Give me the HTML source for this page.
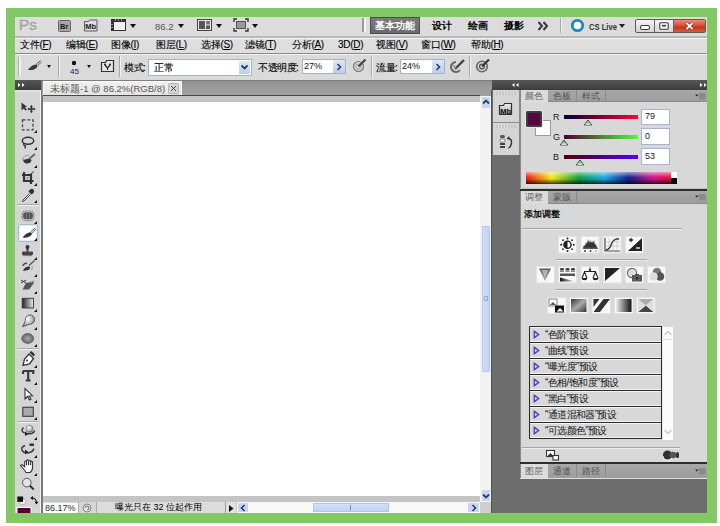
<!DOCTYPE html>
<html><head><meta charset="utf-8">
<style>
*{margin:0;padding:0;box-sizing:border-box}
html,body{width:720px;height:526px;overflow:hidden;background:#fff}
body{position:relative;font-family:"Liberation Sans",sans-serif;color:#111}
div,svg{position:absolute}
.t{white-space:nowrap;line-height:1}
.menu{font-size:10px;color:#000;top:40px;letter-spacing:-0.3px;-webkit-text-stroke:0.12px #000}
.menu u{text-decoration:underline}
.tl{font-size:10px;color:#000;font-weight:bold;top:21px}
.tab{font-size:9px;color:#606060}
.itab{font-size:9px;color:#505050}
.arr{width:0;height:0;border-left:3px solid transparent;border-right:3px solid transparent;border-top:3px solid #111}
.ib{background:#f6f6f6;border:1px solid #e4e4e4}
.row{left:530px;width:132px;height:16px;background:#d9d9d9;border-top:1px solid #2a2a2a;border-bottom:1px solid #fafafa}
.row .tri{left:4px;top:3px}
.row .t{left:14px;top:3px;font-size:10px;color:#111}
</style></head><body>
<!-- frame -->
<div style="left:6px;top:8px;width:711px;height:515px;background:#84c765"></div>
<div style="left:15px;top:17px;width:692px;height:496px;background:#d8d8d8"></div>

<!-- ===== title bar ===== -->
<div style="left:15px;top:17px;width:692px;height:19px;background:#dcdcdc"></div>
<div style="left:15px;top:36px;width:692px;height:2px;background:#b8b8b8"></div>
<div style="left:15px;top:38px;width:692px;height:1px;background:#f4f4f4"></div>
<!-- ===== menu bar ===== -->
<div style="left:15px;top:39px;width:692px;height:14px;background:#dedede"></div>
<div style="left:15px;top:53px;width:692px;height:1px;background:#8a8a8a"></div>
<div style="left:15px;top:54px;width:692px;height:1px;background:#f2f2f2"></div>
<!-- ===== options bar ===== -->
<div style="left:15px;top:55px;width:692px;height:25px;background:#dadada"></div>

<!-- ===== toolbar ===== -->
<div style="left:15px;top:80px;width:26px;height:10px;background:linear-gradient(#575757,#3c3c3c)"></div>
<div style="left:15px;top:90px;width:26px;height:423px;background:#d5d5d5"></div>
<div style="left:40px;top:90px;width:1px;height:423px;background:#f4f4f4"></div>
<div style="left:41px;top:80px;width:2px;height:433px;background:#777"></div>

<!-- ===== document ===== -->
<div style="left:42px;top:80px;width:450px;height:16px;background:linear-gradient(#6e6e6e,#8e8e8e 1px,#9a9a9a 40%,#a0a0a0)"></div>
<div style="left:43px;top:81px;width:139px;height:14px;background:linear-gradient(#f0f0f0,#e4e4e4);border:1px solid #fafafa;border-bottom:0"></div>
<div style="left:43px;top:95px;width:437px;height:1px;background:#4a4a4a"></div>
<div style="left:43px;top:96px;width:437px;height:6px;background:#c4c4c4"></div>
<div style="left:43px;top:102px;width:437px;height:394px;background:#fff"></div>
<div style="left:480px;top:96px;width:12px;height:406px;background:#f2f2f2"></div>
<div style="left:43px;top:496px;width:437px;height:6px;background:#c4c4c4"></div>
<div style="left:43px;top:502px;width:449px;height:11px;background:#dcdcdc"></div>

<!-- ===== dock ===== -->
<div style="left:492px;top:80px;width:215px;height:433px;background:#6d6d6d"></div>
<div style="left:492px;top:80px;width:215px;height:10px;background:linear-gradient(#575757,#3c3c3c)"></div>
<div style="left:493px;top:90px;width:26px;height:65px;background:#d5d5d5"></div>
<div style="left:520px;top:90px;width:187px;height:99px;background:#d8d8d8"></div>
<div style="left:520px;top:191px;width:187px;height:272px;background:#d8d8d8"></div>
<div style="left:520px;top:478px;width:187px;height:1px;background:#e0e0e0"></div>


<!-- title bar content -->
<div class="t" style="left:19px;top:16.5px;font-size:15.5px;color:#a4a4a4;-webkit-text-stroke:0.5px #a4a4a4;text-shadow:1px 1px 0 #f2f2f2">Ps</div>
<svg style="left:57px;top:19px" width="15" height="13"><rect x="1.5" y="1.5" width="12" height="11" rx="1" fill="#a6a6a6" stroke="#666"/><text x="3" y="10" font-size="7.5" font-weight="bold" font-family="Liberation Sans" fill="#1a1a1a">Br</text></svg>
<svg style="left:83px;top:18px" width="16" height="14"><path d="M1.5 3.5h4l1-1.5h7.5v11h-12.5z" fill="#dcdcdc" stroke="#5a5a5a"/><text x="2.2" y="11" font-size="7.5" font-weight="bold" font-family="Liberation Sans" fill="#1a1a1a">Mb</text></svg>
<svg style="left:110px;top:18px" width="17" height="14"><rect x="1.5" y="1.5" width="14" height="11" fill="#f0f0f0" stroke="#333"/><rect x="1" y="1" width="15" height="3" fill="#333"/><rect x="1" y="1" width="3" height="12" fill="#333"/><path d="M5 2h1M8 2h1M11 2h1M2 6v1M2 9v1" stroke="#ddd"/></svg>
<div class="arr" style="left:130px;top:24px;border-width:4px 3px 0 3px"></div>
<div class="t" style="left:155px;top:22px;font-size:9.5px;color:#555">86.2</div>
<div class="arr" style="left:178px;top:24px;border-width:4px 3px 0 3px"></div>
<svg style="left:196px;top:18px" width="17" height="14"><rect x="1.5" y="1.5" width="14" height="11" fill="#e8e8e8" stroke="#444"/><rect x="3" y="3" width="6" height="8" fill="#555"/><rect x="10" y="3" width="4" height="3.5" fill="#777"/><rect x="10" y="7.5" width="4" height="3.5" fill="#555"/></svg>
<div class="arr" style="left:216px;top:24px;border-width:4px 3px 0 3px"></div>
<svg style="left:233px;top:18px" width="16" height="14"><rect x="3.5" y="3.5" width="9" height="7" fill="#999" stroke="#555"/><path d="M1 4V1h3M12 1h3v3M15 10v3h-3M4 13H1v-3" fill="none" stroke="#333" stroke-width="1.4"/></svg>
<div class="arr" style="left:252px;top:24px;border-width:4px 3px 0 3px"></div>
<div style="left:362px;top:18px;width:2px;height:14px;background:#9c9c9c"></div>
<div style="left:364px;top:18px;width:2px;height:14px;background:#f4f4f4"></div>
<div style="left:370px;top:17px;width:50px;height:17px;background:linear-gradient(#7a7a7a,#6a6a6a);border:1px solid #4c4c4c"></div>
<div class="t tl" style="left:375px;color:#fff">基本功能</div>
<div class="t tl" style="left:432px">设计</div>
<div class="t tl" style="left:468px">绘画</div>
<div class="t tl" style="left:504px">摄影</div>
<svg style="left:537px;top:21px" width="13" height="10"><path d="M1.5 1l3.5 4-3.5 4M6.5 1l3.5 4-3.5 4" fill="none" stroke="#3a3a3a" stroke-width="2"/></svg>
<div style="left:560px;top:18px;width:1px;height:15px;background:#a8a8a8"></div>
<div style="left:561px;top:18px;width:1px;height:15px;background:#f0f0f0"></div>
<svg style="left:570px;top:18px" width="15" height="15"><circle cx="7.5" cy="7.5" r="5.2" fill="#fff" stroke="#1b8ac0" stroke-width="2.8"/></svg>
<div class="t" style="left:589px;top:21.5px;font-size:9.5px;font-weight:bold;color:#333;transform:scaleX(0.8);transform-origin:0 0">CS Live</div>
<div class="arr" style="left:619px;top:24px;border-width:4px 3px 0 3px;border-top-color:#222"></div>
<div style="left:635px;top:19px;width:71px;height:14px;border:1px solid #5a5a5a;border-radius:2px;background:linear-gradient(#f4f4f4,#d4d4d4);overflow:hidden"></div>
<div style="left:654px;top:20px;width:1px;height:12px;background:#666"></div>
<div style="left:673px;top:20px;width:1px;height:12px;background:#666"></div>
<div style="left:674px;top:20px;width:31px;height:12px;background:linear-gradient(#ec8a78,#d54a30 50%,#c8341c 60%,#d85a40)"></div>
<svg style="left:639px;top:24px" width="12" height="7"><rect x="1.5" y="1.5" width="9" height="4" rx="1.8" fill="#fff" stroke="#3a3a3a" stroke-width="1.1"/></svg>
<svg style="left:659px;top:22px" width="10" height="8"><rect x="0.8" y="0.8" width="8.4" height="6.4" rx="1" fill="#fff" stroke="#3a3a3a" stroke-width="1.1"/><rect x="3" y="2.8" width="4" height="1.8" fill="#444"/></svg>
<svg style="left:685px;top:22px" width="9" height="8"><path d="M1.5 1l6 6M7.5 1l-6 6" stroke="#5a2010" stroke-width="3"/><path d="M1.5 1l6 6M7.5 1l-6 6" stroke="#fff" stroke-width="1.8"/></svg>


<!-- options bar content -->
<div style="left:18px;top:57px;width:1px;height:19px;background:#b0b0b0"></div>
<div style="left:19px;top:57px;width:2px;height:19px;background:#f0f0f0"></div>
<svg style="left:27px;top:59px" width="16" height="14"><path d="M0.8 10.8C3 8.5 6.5 5.2 9.5 5.6c1.3.6 1.2 2.3-.2 3.6C7 11 3.5 11.4 0.8 10.8z" fill="#3a3a3a"/><path d="M9.3 5.2L13.6 1.6M10.6 6.6L14.6 2.6" stroke="#555" stroke-width="1"/><path d="M10 5.9L14.1 2.1" stroke="#ddd" stroke-width="0.8"/></svg>
<div class="arr" style="left:47px;top:65px;border-width:3px 2.5px 0 2.5px"></div>
<div style="left:58px;top:56px;width:1px;height:21px;background:#a8a8a8"></div>
<div style="left:59px;top:56px;width:1px;height:21px;background:#f2f2f2"></div>
<svg style="left:71px;top:60px" width="6" height="6"><circle cx="3" cy="3" r="2.2" fill="#111"/></svg>
<div class="t" style="left:70px;top:68px;font-size:8px;color:#1a1a50">45</div>
<div class="arr" style="left:87px;top:65px;border-width:3px 2.5px 0 2.5px"></div>
<svg style="left:100px;top:59px" width="15" height="14"><path d="M1.5 3.5h4l1-2h7v11h-12z" fill="#e4e4e4" stroke="#333" stroke-width="1.2"/><path d="M5 6l2.5 3L10 6M7.5 9v2" stroke="#222" stroke-width="1.2" fill="none"/><circle cx="5" cy="5.5" r="1" fill="#222"/><circle cx="10" cy="5.5" r="1" fill="#222"/></svg>
<div style="left:119px;top:56px;width:1px;height:21px;background:#a8a8a8"></div>
<div style="left:120px;top:56px;width:1px;height:21px;background:#f2f2f2"></div>
<div class="t" style="left:124px;top:63px;font-size:10px;color:#000;letter-spacing:-0.5px;-webkit-text-stroke:0.12px #000">模式:</div>
<div style="left:148px;top:59px;width:104px;height:17px;background:#fff;border:1px solid #a4b4c6"></div>
<div class="t" style="left:154px;top:63px;font-size:10px;color:#000;-webkit-text-stroke:0.12px #000">正常</div>
<div style="left:239px;top:61px;width:11px;height:13px;background:linear-gradient(#dde8f8,#bccde8)"></div>
<svg style="left:240px;top:64px" width="9" height="7"><path d="M1.5 1.5l3 3 3-3" fill="none" stroke="#2a3c6a" stroke-width="1.8"/></svg>
<div class="t" style="left:258px;top:63px;font-size:10px;color:#000;letter-spacing:-0.5px;-webkit-text-stroke:0.12px #000">不透明度:</div>
<div style="left:302px;top:59px;width:44px;height:15px;background:#fff;border:1px solid #a4b4c6"></div>
<div style="left:333px;top:60px;width:12px;height:13px;background:linear-gradient(#dde8f8,#bccde8)"></div>
<svg style="left:336px;top:63px" width="6" height="8"><path d="M1.5 1l3 3-3 3" fill="none" stroke="#2a3c6a" stroke-width="1.6"/></svg>
<div class="t" style="left:304px;top:62px;font-size:9px;color:#111">27%</div>
<svg style="left:352px;top:58px" width="15" height="15"><circle cx="6.5" cy="8.5" r="5" fill="none" stroke="#777" stroke-width="1.2"/><circle cx="6.5" cy="8.5" r="2.5" fill="none" stroke="#999"/><path d="M6.5 8.5L13.5 1.5" stroke="#444" stroke-width="2.2"/></svg>
<div style="left:371px;top:56px;width:1px;height:21px;background:#a8a8a8"></div>
<div style="left:372px;top:56px;width:1px;height:21px;background:#f2f2f2"></div>
<div class="t" style="left:376px;top:63px;font-size:10px;color:#000;letter-spacing:-0.5px;-webkit-text-stroke:0.12px #000">流量:</div>
<div style="left:400px;top:59px;width:45px;height:15px;background:#fff;border:1px solid #a4b4c6"></div>
<div style="left:432px;top:60px;width:12px;height:13px;background:linear-gradient(#dde8f8,#bccde8)"></div>
<svg style="left:435px;top:63px" width="6" height="8"><path d="M1.5 1l3 3-3 3" fill="none" stroke="#2a3c6a" stroke-width="1.6"/></svg>
<div class="t" style="left:402px;top:62px;font-size:9px;color:#111">24%</div>
<svg style="left:450px;top:58px" width="16" height="15"><path d="M6 4a5 5 0 1 0 4 8" fill="none" stroke="#666" stroke-width="2"/><path d="M5 11L14 2" stroke="#444" stroke-width="2.4"/><path d="M3 7l3 3" stroke="#888" stroke-width="1.2"/></svg>
<div style="left:469px;top:56px;width:1px;height:21px;background:#a8a8a8"></div>
<div style="left:470px;top:56px;width:1px;height:21px;background:#f2f2f2"></div>
<svg style="left:475px;top:58px" width="16" height="15"><circle cx="7" cy="8.5" r="5.3" fill="none" stroke="#666" stroke-width="1.6"/><circle cx="7" cy="8.5" r="2.4" fill="none" stroke="#555" stroke-width="1.4"/><path d="M7 8.5L14 1.5" stroke="#333" stroke-width="2.2"/></svg>


<!-- doc content -->
<div class="t" style="left:50px;top:84px;font-size:9.5px;color:#555">未标题-1 @ 86.2%(RGB/8)</div>
<svg style="left:168px;top:83px" width="11" height="11"><rect x="0.5" y="0.5" width="10" height="10" rx="1" fill="#d6d6d6" stroke="#b4b4b4"/><path d="M3 3l5 5M8 3l-5 5" stroke="#444" stroke-width="1"/></svg>
<svg style="left:17px;top:82px" width="10" height="6"><path d="M1 1l2.5 2-2.5 2zM5 1l2.5 2-2.5 2z" fill="#fff"/></svg>
<div style="left:482px;top:97px;width:8px;height:11px;background:#c6d6f2"></div>
<svg style="left:482px;top:99px" width="8" height="6"><path d="M1 4.5l3-3 3 3" fill="none" stroke="#2b3d6c" stroke-width="1.8"/></svg>
<div style="left:482px;top:490px;width:8px;height:11px;background:#c6d6f2"></div>
<svg style="left:482px;top:493px" width="8" height="6"><path d="M1 1.5l3 3 3-3" fill="none" stroke="#2b3d6c" stroke-width="1.8"/></svg>
<div style="left:480px;top:502px;width:12px;height:11px;background:#cfcfcf"></div>
<div style="left:236px;top:502px;width:244px;height:11px;background:#f8f8f8"></div>
<div style="left:313px;top:503px;width:76px;height:9px;background:linear-gradient(#d2def8,#c2d2f4);border:1px solid #b0c4ee"></div>
<div style="left:350px;top:505px;width:1px;height:5px;background:#7a8cb0"></div>
<div style="left:238px;top:503px;width:10px;height:9px;background:#c6d6f2"></div>
<svg style="left:240px;top:504px" width="7" height="8"><path d="M4.5 1l-3 3 3 3" fill="none" stroke="#2b3d6c" stroke-width="1.6"/></svg>
<div style="left:468px;top:503px;width:11px;height:9px;background:#c6d6f2"></div>
<svg style="left:471px;top:504px" width="7" height="8"><path d="M1.5 1l3 3-3 3" fill="none" stroke="#2b3d6c" stroke-width="1.6"/></svg>
<div style="left:43px;top:502px;width:35px;height:11px;background:#fafafa;border-top:1px solid #d0dae6"></div>
<div class="t" style="left:45px;top:504px;font-size:9px;color:#333">86.17%</div>
<div style="left:78px;top:502px;width:19px;height:11px;background:#d6d6d6;border-left:1px solid #aaa;border-right:1px solid #aaa"></div>
<svg style="left:82px;top:503px" width="10" height="10"><circle cx="5" cy="5" r="4" fill="#e8e8e8" stroke="#888"/><path d="M3 5a2 2 0 1 1 2 2" fill="none" stroke="#666"/></svg>
<div class="t" style="left:115px;top:503px;font-size:9px;color:#000;letter-spacing:0px">曝光只在 32 位起作用</div>
<div style="left:225px;top:502px;width:12px;height:11px;background:#e0e0e0;border-left:1px solid #9a9a9a;border-right:1px solid #c8c8c8"></div>
<svg style="left:228px;top:504px" width="7" height="9"><path d="M1 1l4.5 3.5L1 8z" fill="#111"/></svg>


<!-- toolbar icons -->
<div style="left:15px;top:90px;width:25px;height:5px;background:linear-gradient(#e6e6e6,#d0d0d0)"></div>
<div style="left:18px;top:224px;width:20px;height:18px;background:#fdfdfd;border:1px solid #a8bccf;border-radius:2px;box-shadow:inset 0 0 0 1px #e4ecf4"></div>
<svg style="left:15px;top:90px" width="26" height="423">
<path d="M6.5 12.5v8l2-2 2.2 2.2 1.2-1.2-2.2-2.2 2.5-.3z" fill="#333"/>
<path d="M16.4 16v6M13.4 19h6" stroke="#333" stroke-width="1.6"/><path d="M16.4 15l-1.5 1.5h3zM16.4 23l-1.5-1.5h3zM12.4 19l1.5-1.5v3zM20.4 19l-1.5-1.5v3z" fill="#333"/>
<rect x="7.5" y="29.8" width="10.5" height="10" fill="none" stroke="#444" stroke-width="1.3" stroke-dasharray="3 1.8"/>
<path d="M22 40v3h-3z" fill="#111"/>
<ellipse cx="13" cy="50.8" rx="5.7" ry="3.5" fill="none" stroke="#333" stroke-width="1.5"/><path d="M9 53.5q-1 2 1.5 2.5l-.5 2.5" fill="none" stroke="#333" stroke-width="1.3"/>
<path d="M22 57v3h-3z" fill="#111"/>
<path d="M8 70a4.5 4.5 0 0 1 6-4.5" fill="none" stroke="#777" stroke-width="1" stroke-dasharray="1.5 1"/><path d="M8 70q1 4 5 3.5q3-.5 3.5-3.5q-2-2-4.5-1q-2 .5-4 1z" fill="#333"/><path d="M14 69L20 64" stroke="#666" stroke-width="1.8"/>
<path d="M22 75v3h-3z" fill="#111"/>
<path d="M9 82v9h9.5M7 85h9v9" fill="none" stroke="#333" stroke-width="2.2"/><path d="M15 84.5l4-3" stroke="#333" stroke-width="1"/><circle cx="12.5" cy="88" r="1.5" fill="#aaa"/>
<path d="M22 93v3h-3z" fill="#111"/>
<path d="M15 99.5q2-1.5 3.5 0q1.5 1.5 0 3.5l-2 1.5-3-3z" fill="#333"/><path d="M14.5 103.5l-6.5 6.5-.5 1.5 1.5-.5 6.5-6.5" fill="#fff" stroke="#444" stroke-width="1"/>
<path d="M22 110v3h-3z" fill="#111"/>
<path d="M2.5 114.5h21" stroke="#a8a8a8"/><path d="M2.5 115.5h21" stroke="#f2f2f2"/>
<rect x="8" y="122.3" width="10" height="7" rx="3" fill="#555"/><rect x="6.8" y="121" width="12.4" height="9.6" rx="4" fill="none" stroke="#666" stroke-width="1.2" stroke-dasharray="1 1"/><path d="M11.5 123v5M14.5 123v5" stroke="#888" stroke-width="0.7"/>
<path d="M22 131v3h-3z" fill="#111"/>
<path d="M7.5 147.5C9.5 145 13 141.8 16 142.2c1.3.6 1.2 2.3-.2 3.6C13.5 147.6 10 148 7.5 147.5z" fill="#333"/><path d="M15.8 141.8L20.2 137.8M17.1 143.2L21.2 139" stroke="#555" stroke-width="1"/><path d="M16.5 142.5L20.7 138.4" stroke="#ddd" stroke-width="0.8"/>
<path d="M22 148v3h-3z" fill="#111"/>
<circle cx="12.5" cy="157" r="2" fill="#333"/><path d="M12.5 158v3.5" stroke="#333" stroke-width="2"/><rect x="7" y="161.5" width="11" height="3.5" rx="0.8" fill="#444"/><path d="M8 165.6h9" stroke="#777" stroke-width="1"/>
<path d="M22 167v3h-3z" fill="#111"/>
<path d="M8 180.5c1.5-3 4-4.5 6.5-4 1 .7.5 2-.5 3C12.5 180.5 10 181 8 180.5z" fill="#333"/><path d="M14 175.5l5.5-5" stroke="#555" stroke-width="1.3"/><path d="M8 176a3 3 0 0 1 4-2.5" fill="none" stroke="#444" stroke-width="1.5"/><path d="M17 176a3 3 0 0 1 -1 4" fill="none" stroke="#999" stroke-width="1"/>
<path d="M22 184v3h-3z" fill="#111"/>
<path d="M6 190l5 3M6 193l5-3" stroke="#333" stroke-width="1"/><path d="M11 193h8l-5 6.5h-6.5z" fill="#555"/><path d="M11 193l8-2.5v2.5" fill="#888"/>
<path d="M22 201v3h-3z" fill="#111"/>
<defs><linearGradient id="gr" x1="0" x2="1"><stop offset="0" stop-color="#222"/><stop offset="1" stop-color="#eee"/></linearGradient>
<radialGradient id="rg" cx="0.4" cy="0.35" r="0.7"><stop offset="0" stop-color="#fff"/><stop offset="0.6" stop-color="#bbb"/><stop offset="1" stop-color="#555"/></radialGradient>
<radialGradient id="rg2" cx="0.5" cy="0.5" r="0.6"><stop offset="0" stop-color="#aaa"/><stop offset="1" stop-color="#555"/></radialGradient></defs>
<rect x="7.2" y="208.3" width="11.3" height="9.7" fill="url(#gr)" stroke="#333" stroke-width="0.9"/>
<path d="M22 219v3h-3z" fill="#111"/>
<path d="M7.5 236.8L10.5 230.5a4.6 4.6 0 1 1 4 3.6z" fill="url(#rg)" stroke="#555" stroke-width="0.9"/>
<path d="M22 237v3h-3z" fill="#111"/>
<ellipse cx="12.7" cy="248.5" rx="6" ry="5" fill="url(#rg2)" stroke="#666" stroke-width="0.8"/>
<path d="M22 254v3h-3z" fill="#111"/>
<path d="M2.5 258.5h21" stroke="#a8a8a8"/><path d="M2.5 259.5h21" stroke="#f2f2f2"/>
<path d="M14 264l4.5 4.5-4 5.5-6.5 1.5 1.5-6.5z" fill="#fff" stroke="#333" stroke-width="1.3"/><path d="M14.5 262.5l2-1.5 3.5 3.5-1.5 2z" fill="#333"/><circle cx="12" cy="270.5" r="1" fill="#333"/>
<path d="M22 275v3h-3z" fill="#111"/>
<path d="M8 281h10.3v3M13.2 281v9.5M10.8 290.5h4.8M8 281v3" fill="none" stroke="#3a3a3a" stroke-width="2.2"/>
<path d="M22 292v3h-3z" fill="#111"/>
<path d="M10 298.5v10.5l2.5-2.5 2 3.5 1.5-.8-2-3.3 3.5-.2z" fill="#fff" stroke="#333" stroke-width="1.1"/>
<path d="M22 310v3h-3z" fill="#111"/>
<rect x="7.8" y="317.3" width="10.5" height="9" fill="#aaa" stroke="#444" stroke-width="1.2"/>
<path d="M22 327v3h-3z" fill="#111"/>
<path d="M2.5 331.5h21" stroke="#a8a8a8"/><path d="M2.5 332.5h21" stroke="#f2f2f2"/>
<circle cx="14.5" cy="338.8" r="3.6" fill="url(#rg)" stroke="#777" stroke-width="0.6"/><path d="M8.5 337.5q-3 3 0 5t8 1q3-1 3-3" fill="none" stroke="#3a3a3a" stroke-width="1.5"/><path d="M10 341.5l3.5 2.5-3.5 2z" fill="#222"/>
<path d="M22 347v3h-3z" fill="#111"/>
<rect x="14.5" y="353.5" width="4.5" height="2.5" fill="#333"/><path d="M10 355.5q-5 2-2.5 5.5t8.5 1q3-1.5 2.5-3.5" fill="none" stroke="#3a3a3a" stroke-width="1.5"/><path d="M10 359.5l3.5 2.5-3.5 2z" fill="#222"/>
<path d="M22 365v3h-3z" fill="#111"/>
<path d="M9.5 380l-3.8-4.2q.2-1.6 2-.8l2 1.8v-5.3q.9-1.1 1.9 0v3.8-5q1-1.1 2 0v5-4.5q1-1.1 2 0v4.5-3.4q1-1 1.9 0v5.6q0 3.5-2.5 5h-4z" fill="#fff" stroke="#333" stroke-width="1.1"/>
<path d="M22 383v3h-3z" fill="#111"/>
<circle cx="11.8" cy="392.6" r="4.3" fill="#e4e4e4" stroke="#555" stroke-width="1"/><path d="M14.9 395.7l3.8 3.8" stroke="#333" stroke-width="2"/>
<rect x="4.8" y="409" width="5.6" height="5.2" rx="1.5" fill="#fff" stroke="#999" stroke-width="0.7"/><rect x="2.3" y="406.5" width="5.8" height="5.4" fill="#111"/>
<path d="M17 408q4 0 4.5 4.5" fill="none" stroke="#222" stroke-width="1.1"/><path d="M15.2 408l2.8-2v4zM21.5 414.5l-2-2.8h4z" fill="#111"/>
<rect x="2" y="417.5" width="14" height="6" fill="#4f0035" stroke="#fff" stroke-width="1"/>
</svg>


<!-- dock header icons -->
<svg style="left:511px;top:82px" width="8" height="6"><path d="M3.5 1L1 3l2.5 2zM7.5 1L5 3l2.5 2z" fill="#fff"/></svg>
<svg style="left:699px;top:82px" width="8" height="6"><path d="M1 1l2.5 2L1 5zM5 1l2.5 2L5 5z" fill="#fff"/></svg>
<!-- icon column -->
<div style="left:519px;top:90px;width:1px;height:65px;background:#888"></div>
<div style="left:496px;top:92px;width:20px;height:3px;background:repeating-linear-gradient(90deg,#c4c4c4 0 2px,#e4e4e4 2px 3px)"></div>
<div style="left:493px;top:122px;width:26px;height:1px;background:#8a8a8a"></div>
<div style="left:496px;top:125px;width:20px;height:3px;background:repeating-linear-gradient(90deg,#c4c4c4 0 2px,#e4e4e4 2px 3px)"></div>
<svg style="left:498px;top:102px" width="16" height="14"><defs><linearGradient id="mbg" x1="0" y1="0" x2="0" y2="1"><stop offset="0" stop-color="#f4f4f4"/><stop offset="1" stop-color="#9a9a9a"/></linearGradient></defs><path d="M1.5 3.5h4l1-2h7v11h-12z" fill="url(#mbg)" stroke="#333" stroke-width="1.2"/><text x="2.2" y="11.5" font-size="7.5" font-weight="bold" font-family="Liberation Sans" fill="#111">Mb</text></svg>
<svg style="left:499px;top:134px" width="15" height="16"><rect x="1" y="1" width="5" height="3" rx="1.5" fill="#555"/><rect x="1" y="5" width="5" height="3" rx="1.5" fill="#fff" stroke="#555" stroke-width="0.8"/><rect x="1" y="9" width="5" height="2" fill="#444"/><rect x="1" y="12" width="5" height="2" fill="#444"/><path d="M9 4q4 1 3.5 5t-3 5" fill="none" stroke="#333" stroke-width="1.4"/><path d="M7.5 5l2.5-3 1 3.5z" fill="#333"/></svg>

<!-- color panel -->
<div style="left:520px;top:90px;width:187px;height:12px;background:linear-gradient(#a8a8a8,#9c9c9c)"></div>
<div style="left:520px;top:101px;width:187px;height:1px;background:#8a8a8a"></div>
<div style="left:520px;top:90px;width:28px;height:13px;background:#dcdcdc;border-left:1px solid #888"></div>
<div style="left:576px;top:90px;width:1px;height:11px;background:#8a8a8a"></div>
<div style="left:605px;top:90px;width:1px;height:11px;background:#8a8a8a"></div>
<div class="t tab" style="left:525px;top:92px">颜色</div>
<div class="t itab" style="left:553px;top:92px">色板</div>
<div class="t itab" style="left:582px;top:92px">样式</div>
<svg style="left:694px;top:92px" width="12" height="8"><path d="M1 2.5h3.5L2.75 4.5z" fill="#222"/><rect x="5" y="1" width="6.5" height="6.5" fill="#8a8a8a"/></svg>
<div style="left:520px;top:102px;width:1px;height:87px;background:#8a8a8a"></div>
<div style="left:535px;top:120px;width:16px;height:16px;background:#fff;border:1px solid #9a9a9a"></div>
<div style="left:526px;top:111px;width:16px;height:16px;background:#540840;border:2px solid #3e3e3e;outline:1px solid #e8e8e8;border-radius:1px"></div>
<div class="t" style="left:553px;top:113px;font-size:9px;color:#222">R</div>
<div class="t" style="left:553px;top:133px;font-size:9px;color:#222">G</div>
<div class="t" style="left:553px;top:153px;font-size:9px;color:#222">B</div>
<div style="left:564px;top:115px;width:74px;height:4px;background:linear-gradient(90deg,#000035,#ff0035)"></div>
<div style="left:564px;top:135px;width:74px;height:4px;background:linear-gradient(90deg,#4f0035,#4fff35)"></div>
<div style="left:564px;top:155px;width:74px;height:4px;background:linear-gradient(90deg,#4f0000,#4f00ff)"></div>
<svg style="left:583px;top:119px" width="10" height="7"><path d="M5 1l3.8 5H1.2z" fill="#7ed07a" stroke="#333" stroke-width="0.8"/><path d="M2.5 5.2h5" stroke="#fff"/></svg>
<svg style="left:559px;top:139px" width="10" height="7"><path d="M5 1l3.8 5H1.2z" fill="#7ed07a" stroke="#333" stroke-width="0.8"/><path d="M2.5 5.2h5" stroke="#fff"/></svg>
<svg style="left:575px;top:159px" width="10" height="7"><path d="M5 1l3.8 5H1.2z" fill="#7ed07a" stroke="#333" stroke-width="0.8"/><path d="M2.5 5.2h5" stroke="#fff"/></svg>
<div style="left:641px;top:109px;width:29px;height:16px;background:#fff;border:1px solid #a6b6c8"></div>
<div style="left:641px;top:128px;width:29px;height:17px;background:#fff;border:1px solid #a6b6c8"></div>
<div style="left:641px;top:148px;width:29px;height:17px;background:#fff;border:1px solid #a6b6c8"></div>
<div class="t" style="left:645px;top:112px;font-size:9px;color:#222">79</div>
<div class="t" style="left:645px;top:132px;font-size:9px;color:#222">0</div>
<div class="t" style="left:645px;top:152px;font-size:9px;color:#222">53</div>
<div style="left:526px;top:172px;width:151px;height:12px;background:linear-gradient(90deg,#e81818,#f4e818 17%,#10a040 35%,#20a8e8 52%,#182090 68%,#d01888 84%,#e81020);"></div>
<div style="left:526px;top:172px;width:151px;height:12px;background:linear-gradient(rgba(255,255,255,0.55),rgba(255,255,255,0) 45%,rgba(0,0,0,0) 55%,rgba(0,0,0,0.75))"></div>
<div style="left:671px;top:172px;width:6px;height:6px;background:#fff"></div>
<div style="left:671px;top:178px;width:6px;height:6px;background:#000"></div>
<div style="left:520px;top:188px;width:187px;height:1px;background:#c0c0c0"></div>
<div style="left:520px;top:189px;width:187px;height:2px;background:#2e2e2e"></div>

<!-- adjustments panel -->
<div style="left:520px;top:191px;width:187px;height:12px;background:linear-gradient(#a8a8a8,#9c9c9c)"></div>
<div style="left:520px;top:203px;width:187px;height:1px;background:#8a8a8a"></div>
<div style="left:520px;top:191px;width:28px;height:13px;background:#dcdcdc;border-left:1px solid #888"></div>
<div style="left:576px;top:191px;width:1px;height:12px;background:#8a8a8a"></div>
<div class="t tab" style="left:525px;top:193px">调整</div>
<div class="t itab" style="left:553px;top:193px">蒙版</div>
<svg style="left:694px;top:193px" width="12" height="8"><path d="M1 2.5h3.5L2.75 4.5z" fill="#222"/><rect x="5" y="1" width="6.5" height="6.5" fill="#8a8a8a"/></svg>
<div style="left:520px;top:204px;width:1px;height:259px;background:#8a8a8a"></div>
<div class="t" style="left:524px;top:210px;font-size:9px;font-weight:bold;color:#111">添加调整</div>
<div style="left:522px;top:228px;width:160px;height:1px;background:#a4a4a4"></div>
<div style="left:522px;top:229px;width:160px;height:1px;background:#ececec"></div>
<div style="left:556px;top:259px;width:91px;height:1px;background:#a4a4a4"></div>
<div style="left:556px;top:260px;width:91px;height:1px;background:#ececec"></div>
<div style="left:556px;top:289px;width:91px;height:1px;background:#a4a4a4"></div>
<div style="left:556px;top:290px;width:91px;height:1px;background:#ececec"></div>


<!-- v scroll thumb -->
<div style="left:482px;top:226px;width:8px;height:146px;background:linear-gradient(90deg,#d0ddf8,#c2d2f4);border:1px solid #b8caf0"></div>
<div style="left:484px;top:296px;width:4px;height:5px;border:1px solid #98abd4"></div>
<div style="left:491px;top:90px;width:1px;height:423px;background:#505050"></div>
<!-- adjust icons row1 -->
<svg style="left:558px;top:236px" width="90" height="18">
<rect x="0.5" y="0.5" width="18" height="16.5" fill="#f8f8f8" stroke="#e2e2e2"/>
<circle cx="9.5" cy="8.7" r="3.6" fill="#fff" stroke="#222" stroke-width="1.4"/><path d="M9.5 5.1a3.6 3.6 0 0 0 0 7.2z" fill="#222"/>
<g fill="#222"><circle cx="9.5" cy="2.5" r="1"/><circle cx="9.5" cy="15" r="1"/><circle cx="3.2" cy="8.7" r="1"/><circle cx="15.8" cy="8.7" r="1"/><circle cx="5" cy="4.2" r="0.9"/><circle cx="14" cy="4.2" r="0.9"/><circle cx="5" cy="13.2" r="0.9"/><circle cx="14" cy="13.2" r="0.9"/></g>
<rect x="23" y="0.5" width="18" height="16.5" fill="#f8f8f8" stroke="#e2e2e2"/>
<path d="M25 12l1-3 1 1 1-4 1 2 1-5 1 4 1-3 1 3 1-2 1 2 1-3 1 5 1-1 1 4z" fill="#333"/><rect x="25" y="11.5" width="15" height="1.5" fill="#555"/>
<g fill="#333"><circle cx="27" cy="15" r="0.9"/><circle cx="32.5" cy="15" r="0.9"/></g><circle cx="38" cy="15" r="0.9" fill="#aaa"/>
<rect x="45" y="0.5" width="18" height="16.5" fill="#f8f8f8" stroke="#e2e2e2"/>
<path d="M47 2v13h15" fill="none" stroke="#444" stroke-width="1.2"/><path d="M47 6h15M47 10h15M51 2v13M55 2v13M59 2v13" stroke="#bbb" stroke-width="0.6"/><path d="M48 14q4-1 5-5t5-6h3" fill="none" stroke="#333" stroke-width="1.3"/>
<rect x="67.5" y="0.5" width="18" height="16.5" fill="#f8f8f8" stroke="#e2e2e2"/>
<path d="M70 15L84 2v13z" fill="#222"/><path d="M71 4h4M73 2v4" stroke="#222" stroke-width="1.3"/><path d="M78 12h4" stroke="#fff" stroke-width="1.3"/>
</svg>
<!-- row2 -->
<svg style="left:536px;top:266px" width="131" height="18">
<defs><linearGradient id="vg" x1="0" y1="0" x2="0" y2="1"><stop offset="0" stop-color="#555"/><stop offset="1" stop-color="#bbb"/></linearGradient>
<linearGradient id="hg" x1="0" x2="1"><stop offset="0" stop-color="#111"/><stop offset="1" stop-color="#eee"/></linearGradient>
<linearGradient id="dg" x1="0" y1="0" x2="1" y2="1"><stop offset="0" stop-color="#333"/><stop offset="0.5" stop-color="#aaa"/><stop offset="1" stop-color="#333"/></linearGradient></defs>
<rect x="0.5" y="0.5" width="18" height="16.5" fill="#f8f8f8" stroke="#e2e2e2"/>
<path d="M3 2.5h12l-6 12.5z" fill="url(#vg)"/><path d="M5.5 4h7l-3.5 7.5z" fill="#ddd" opacity="0.6"/>
<rect x="22.5" y="0.5" width="18" height="16.5" fill="#f8f8f8" stroke="#e2e2e2"/>
<g fill="#444"><rect x="24" y="2" width="4" height="2.5" rx="1"/><rect x="29.5" y="2" width="4" height="2.5" rx="1"/><rect x="35" y="2" width="4" height="2.5" rx="1"/></g>
<g fill="#888"><rect x="24" y="4.5" width="4" height="1.5"/><rect x="29.5" y="4.5" width="4" height="1.5"/><rect x="35" y="4.5" width="4" height="1.5"/></g>
<rect x="24" y="7.5" width="15" height="2.5" fill="#555"/><path d="M24 11.5v4h15z" fill="url(#hg)"/>
<rect x="45" y="0.5" width="18" height="16.5" fill="#f8f8f8" stroke="#e2e2e2"/>
<path d="M54 1.5v4M48 5.5h12M48.5 6l-2.5 6M48.5 6l2.5 6M59.5 6l-2.5 6M59.5 6l2.5 6" stroke="#222" stroke-width="1.1" fill="none"/>
<path d="M45.8 12h5.4a2.7 2.2 0 0 1-5.4 0zM56.8 12h5.4a2.7 2.2 0 0 1-5.4 0z" fill="#222"/><path d="M52.5 3.5l1.5 2 1.5-2" fill="#222"/>
<rect x="67.5" y="0.5" width="18" height="16.5" fill="#f8f8f8" stroke="#e2e2e2"/>
<path d="M69 2h15L69 15z" fill="#222"/>
<rect x="89.5" y="0.5" width="18" height="16.5" fill="#f8f8f8" stroke="#e2e2e2"/>
<circle cx="96" cy="7" r="4.6" fill="#ddd" stroke="#666" stroke-width="1.1"/><rect x="96" y="9" width="10" height="6.5" fill="#555"/><rect x="99" y="8" width="4" height="1.5" fill="#555"/><circle cx="101" cy="12.2" r="2" fill="#222" stroke="#999" stroke-width="0.6"/>
<rect x="111.5" y="0.5" width="18" height="16.5" fill="#f8f8f8" stroke="#e2e2e2"/>
<circle cx="121" cy="6" r="4.3" fill="#777"/><circle cx="124" cy="10.5" r="4.3" fill="#555"/><circle cx="117.5" cy="10.5" r="4.3" fill="#ddd"/>
</svg>
<!-- row3 -->
<svg style="left:547px;top:297px" width="110" height="18">
<rect x="0.5" y="0.5" width="18.5" height="16" fill="#f8f8f8" stroke="#e2e2e2"/>
<rect x="2" y="2" width="8" height="7" fill="#fff" stroke="#666" stroke-width="0.8"/><path d="M3 8l3-3 3 3z" fill="#555"/>
<rect x="8" y="8.5" width="9" height="7" fill="#111"/><path d="M9.5 14.5l3.5-3.5 3.5 3.5z" fill="#fff"/>
<rect x="22.5" y="0.5" width="18.5" height="16" fill="#f8f8f8" stroke="#e2e2e2"/>
<rect x="24" y="2" width="15.5" height="13" fill="url(#dg)"/>
<rect x="45" y="0.5" width="18.5" height="16" fill="#f8f8f8" stroke="#e2e2e2"/>
<path d="M46.5 2h6l-6 8zM46.5 15l10-13h6.5l-10 13z" fill="#333"/>
<rect x="67.5" y="0.5" width="18.5" height="16" fill="#f8f8f8" stroke="#e2e2e2"/>
<rect x="69" y="2" width="15.5" height="13" fill="url(#hg)" transform="rotate(180 76.75 8.5)"/>
<rect x="89.5" y="0.5" width="18.5" height="16" fill="#f8f8f8" stroke="#e2e2e2"/>
<path d="M91 2h15.5l-7.75 6.5z" fill="#aaa"/><path d="M91 15h15.5l-7.75-6.5z" fill="#444"/><path d="M91 2l7.75 6.5L91 15zM106.5 2l-7.75 6.5 7.75 6.5z" fill="#ddd"/>
</svg>


<!-- preset list -->
<div style="left:529px;top:326px;width:133px;height:113px;background:#2a2a2a"></div>
<div style="left:662px;top:327px;width:11px;height:113px;background:#fbfbfb;border-left:1px solid #e8e8e8"></div>
<svg style="left:663px;top:329px" width="10" height="8"><path d="M1.5 6l3.5-3.5L8.5 6" fill="none" stroke="#c8c8c8" stroke-width="1.3"/></svg>
<div style="left:663px;top:339px;width:9px;height:1px;background:#ddd"></div>
<svg style="left:663px;top:428px" width="10" height="8"><path d="M1.5 2l3.5 3.5L8.5 2" fill="none" stroke="#c8c8c8" stroke-width="1.3"/></svg>
<div style="left:530px;top:327px;width:131px;height:15px;background:#d8d8d8;border-top:1px solid #f4f4f4;border-bottom:1px solid #f4f4f4"></div>
<svg style="left:533px;top:330px" width="7" height="9"><path d="M1.2 1.2v6.6l4.6-3.3z" fill="#c8c8f0" stroke="#3c3ca0" stroke-width="1.2"/></svg>
<div class="t" style="left:545px;top:330px;font-size:10px;color:#111;letter-spacing:-0.6px">“色阶”预设</div>
<div style="left:530px;top:343px;width:131px;height:15px;background:#d8d8d8;border-top:1px solid #f4f4f4;border-bottom:1px solid #f4f4f4"></div>
<svg style="left:533px;top:346px" width="7" height="9"><path d="M1.2 1.2v6.6l4.6-3.3z" fill="#c8c8f0" stroke="#3c3ca0" stroke-width="1.2"/></svg>
<div class="t" style="left:545px;top:346px;font-size:10px;color:#111;letter-spacing:-0.6px">“曲线”预设</div>
<div style="left:530px;top:359px;width:131px;height:15px;background:#d8d8d8;border-top:1px solid #f4f4f4;border-bottom:1px solid #f4f4f4"></div>
<svg style="left:533px;top:362px" width="7" height="9"><path d="M1.2 1.2v6.6l4.6-3.3z" fill="#c8c8f0" stroke="#3c3ca0" stroke-width="1.2"/></svg>
<div class="t" style="left:545px;top:362px;font-size:10px;color:#111;letter-spacing:-0.6px">“曝光度”预设</div>
<div style="left:530px;top:375px;width:131px;height:15px;background:#d8d8d8;border-top:1px solid #f4f4f4;border-bottom:1px solid #f4f4f4"></div>
<svg style="left:533px;top:378px" width="7" height="9"><path d="M1.2 1.2v6.6l4.6-3.3z" fill="#c8c8f0" stroke="#3c3ca0" stroke-width="1.2"/></svg>
<div class="t" style="left:545px;top:378px;font-size:10px;color:#111;letter-spacing:-0.6px">“色相/饱和度”预设</div>
<div style="left:530px;top:391px;width:131px;height:15px;background:#d8d8d8;border-top:1px solid #f4f4f4;border-bottom:1px solid #f4f4f4"></div>
<svg style="left:533px;top:394px" width="7" height="9"><path d="M1.2 1.2v6.6l4.6-3.3z" fill="#c8c8f0" stroke="#3c3ca0" stroke-width="1.2"/></svg>
<div class="t" style="left:545px;top:394px;font-size:10px;color:#111;letter-spacing:-0.6px">“黑白”预设</div>
<div style="left:530px;top:407px;width:131px;height:15px;background:#d8d8d8;border-top:1px solid #f4f4f4;border-bottom:1px solid #f4f4f4"></div>
<svg style="left:533px;top:410px" width="7" height="9"><path d="M1.2 1.2v6.6l4.6-3.3z" fill="#c8c8f0" stroke="#3c3ca0" stroke-width="1.2"/></svg>
<div class="t" style="left:545px;top:410px;font-size:10px;color:#111;letter-spacing:-0.6px">“通道混和器”预设</div>
<div style="left:530px;top:423px;width:131px;height:15px;background:#d8d8d8;border-top:1px solid #f4f4f4;border-bottom:1px solid #f4f4f4"></div>
<svg style="left:533px;top:426px" width="7" height="9"><path d="M1.2 1.2v6.6l4.6-3.3z" fill="#c8c8f0" stroke="#3c3ca0" stroke-width="1.2"/></svg>
<div class="t" style="left:545px;top:426px;font-size:10px;color:#111;letter-spacing:-0.6px">“可选颜色”预设</div>

<div style="left:522px;top:447px;width:158px;height:1px;background:#a4a4a4"></div>
<div style="left:522px;top:448px;width:158px;height:1px;background:#ececec"></div>
<svg style="left:545px;top:449px" width="15" height="12"><rect x="1.5" y="1.5" width="8" height="6" fill="#fff" stroke="#333" stroke-width="1.1"/><path d="M2.5 7l3-3 3 3z" fill="#333"/><rect x="8" y="6.5" width="5.5" height="4.5" fill="#fff" stroke="#333" stroke-width="1.1"/></svg>
<svg style="left:662px;top:449px" width="18" height="13"><circle cx="5.5" cy="6" r="4.6" fill="#333"/><path d="M1 7a4.5 4.5 0 0 0 9 0" fill="none" stroke="#fff" stroke-width="0.8"/><circle cx="11" cy="6" r="3.3" fill="#555"/><rect x="14" y="3" width="3" height="6" rx="1.5" fill="#333"/></svg>
<div style="left:520px;top:462px;width:187px;height:2px;background:#2e2e2e"></div>
<!-- layers tabs -->
<div style="left:520px;top:464px;width:187px;height:14px;background:linear-gradient(#a8a8a8,#9c9c9c)"></div>
<div style="left:520px;top:464px;width:28px;height:14px;background:#dcdcdc;border-left:1px solid #888"></div>
<div style="left:576px;top:464px;width:1px;height:13px;background:#8a8a8a"></div>
<div style="left:605px;top:464px;width:1px;height:13px;background:#8a8a8a"></div>
<div class="t tab" style="left:525px;top:467px">图层</div>
<div class="t itab" style="left:553px;top:467px">通道</div>
<div class="t itab" style="left:582px;top:467px">路径</div>
<svg style="left:694px;top:467px" width="12" height="8"><path d="M1 2.5h3.5L2.75 4.5z" fill="#222"/><rect x="5" y="1" width="6.5" height="6.5" fill="#8a8a8a"/></svg>

<!-- menu text -->
<div class="t menu" style="left:20px">文件(<u>F</u>)</div>
<div class="t menu" style="left:66px">编辑(<u>E</u>)</div>
<div class="t menu" style="left:111px">图像(<u>I</u>)</div>
<div class="t menu" style="left:156px">图层(<u>L</u>)</div>
<div class="t menu" style="left:201px">选择(<u>S</u>)</div>
<div class="t menu" style="left:245px">滤镜(<u>T</u>)</div>
<div class="t menu" style="left:292px">分析(<u>A</u>)</div>
<div class="t menu" style="left:338px">3D(<u>D</u>)</div>
<div class="t menu" style="left:376px">视图(<u>V</u>)</div>
<div class="t menu" style="left:421px">窗口(<u>W</u>)</div>
<div class="t menu" style="left:471px">帮助(<u>H</u>)</div>

</body></html>
